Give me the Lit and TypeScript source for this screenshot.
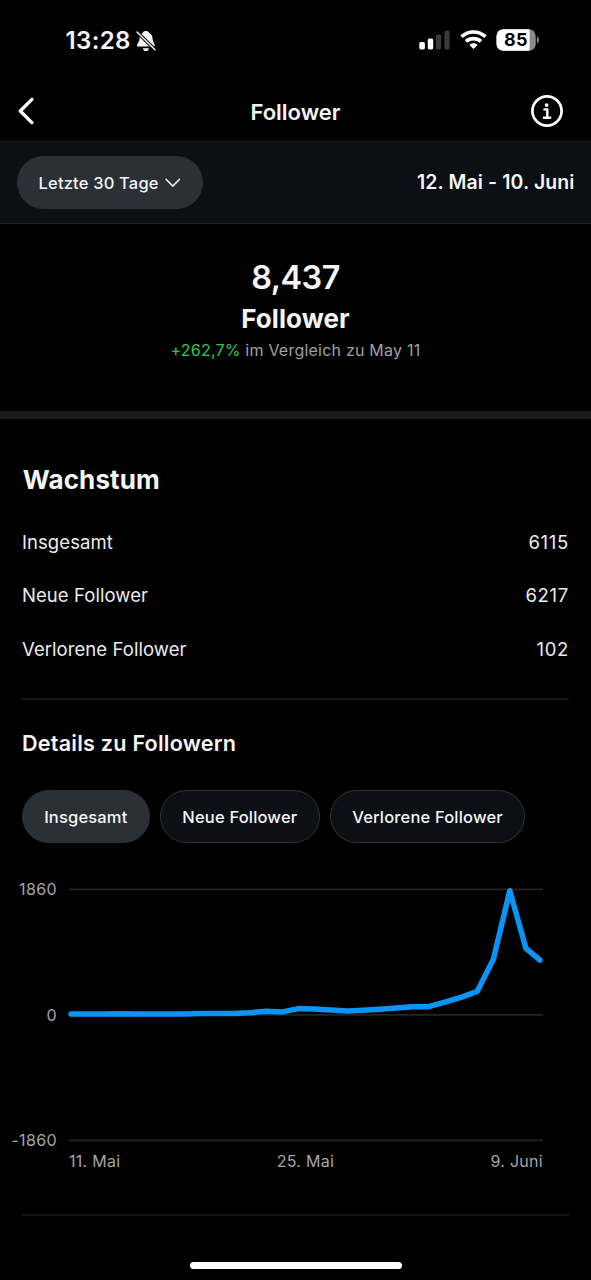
import { LitElement, html, svg, css } from "lit";
import { customElement, property, state } from "lit/decorators.js";
import { classMap } from "lit/directives/class-map.js";

const DAILY = [
  12, 12, 13, 18, 14, 12, 12, 15, 20, 21, 19, 32, 53, 45, 93, 89, 72, 56, 70, 84,
  104, 121, 122, 190, 260, 350, 830, 1840, 985, 810,
];
const MAX = 1860;

@customElement("status-bar")
class StatusBar extends LitElement {
  static styles = css`
    :host { display: flex; align-items: center; height: 81px; padding: 0 51px 0 65.5px; box-sizing: border-box; }
    .time { font-size: 24px; font-weight: 600; letter-spacing: 0.4px; line-height: 28px; }
    .bell { margin-left: 5px; }
    .right { margin-left: auto; display: flex; align-items: center; padding-bottom: 1px; }
    .wifi { margin-left: 10px; }
    .battery { margin-left: 9px; }
    svg { display: block; }
    .level { font: 700 18px Inter, sans-serif; letter-spacing: 0.3px; }
  `;
  render() {
    return html`
      <span class="time">13:28</span>
      <svg class="bell" width="20" height="22" viewBox="0 0 20 22">
        <path fill="#f4f4f4" d="M9.9 1C8.4 1 7.3 1.6 6.7 2.7C4.7 3.8 3.6 5.8 3.5 8.9C3.4 12.1 1 13.4 1 15.4C1 16.2 1.5 16.5 2.3 16.5H17.4C18.2 16.5 18.7 16.2 18.7 15.4C18.7 13.4 16.8 12.1 16.6 8.9C16.5 5.8 15.2 3.8 13.1 2.7C12.5 1.6 11.4 1 9.9 1ZM6.8 18.2H13C12.6 20.2 11.5 21 9.9 21S7.2 20.2 6.8 18.2Z"/>
        <path stroke="#000" stroke-width="3.4" d="M0.5 1.4L19.5 20.2"/>
        <path stroke="#f4f4f4" stroke-width="1.5" stroke-linecap="round" d="M1 2L19 19.8"/>
      </svg>
      <div class="right">
        <svg width="31" height="20" viewBox="0 0 31 20">
          <rect x="0.3" y="12" width="5.6" height="7.4" rx="1.6" fill="#fff"/>
          <rect x="8.8" y="8.6" width="5.4" height="10.8" rx="1.6" fill="#fff"/>
          <rect x="17" y="4.6" width="5.2" height="14.8" rx="1.6" fill="#3a3a3a"/>
          <rect x="25.4" y="0.6" width="5.2" height="18.8" rx="1.6" fill="#3a3a3a"/>
        </svg>
        <svg class="wifi" width="27" height="20" viewBox="0 0 27 20">
          <g fill="none" stroke="#fff" stroke-width="3.7">
            <path d="M1.5 6.7C8.3 0.4 18.7 0.4 25.5 6.7"/>
            <path d="M6 11.4C10.3 7.6 16.7 7.6 21 11.4"/>
          </g>
          <path fill="#fff" d="M13.5 19L9.3 14.9C11.6 12.6 15.4 12.6 17.7 14.9Z"/>
        </svg>
        <svg class="battery" width="44" height="22" viewBox="0 0 44 22">
          <defs><clipPath id="body"><rect width="39.2" height="21.4" x="0.5" y="0.3" rx="6.8"/></clipPath></defs>
          <g clip-path="url(#body)">
            <rect width="40" height="22" fill="#8b8b8b"/>
            <rect width="33.6" height="22" fill="#fff"/>
          </g>
          <path fill="#8b8b8b" d="M41 7.6C43.7 8.6 43.7 13.4 41 14.4Z"/>
          <text class="level" x="8" y="17.4" fill="#000">85</text>
        </svg>
      </div>
    `;
  }
}

@customElement("nav-header")
class NavHeader extends LitElement {
  static styles = css`
    :host { display: grid; grid-template-columns: 60px 1fr 60px; align-items: center; height: 60px; box-sizing: border-box; }
    h1 { margin: 0; text-align: center; font-size: 22px; font-weight: 600; line-height: 28px; padding-top: 1.5px; }
    .back { display: block; margin-left: 17px; }
    .info { display: block; justify-self: end; margin-right: 27px; }
  `;
  render() {
    return html`
      <svg class="back" width="18" height="28" viewBox="0 0 18 28">
        <path d="M14.9 2.3L3.3 14L14.9 25.6" fill="none" stroke="#fff" stroke-width="3.3" stroke-linecap="round" stroke-linejoin="round"/>
      </svg>
      <h1>Follower</h1>
      <svg class="info" width="34" height="34" viewBox="0 0 34 34">
        <circle cx="17" cy="17" r="14.6" fill="none" stroke="#fff" stroke-width="2.7"/>
        <circle cx="16.6" cy="11.1" r="1.9" fill="#fff"/>
        <path d="M14.4 15.4H17.3V23.6M13.9 23.7H20.2" fill="none" stroke="#fff" stroke-width="2.4" stroke-linecap="round" stroke-linejoin="round"/>
      </svg>
    `;
  }
}

@customElement("follower-chart")
class FollowerChart extends LitElement {
  @property({ attribute: false }) values: number[] = [];
  static styles = css`
    :host { display: grid; grid-template-columns: 57px 474px; column-gap: 12px; align-content: start; }
    .axis { display: flex; flex-direction: column; justify-content: space-between; height: 271px; text-align: right; }
    .axis, .dates { font-size: 16px; line-height: 20px; color: #a5a5a5; letter-spacing: 0.4px; }
    .plot { display: block; overflow: visible; margin-top: 9px; }
    .dates { grid-column: 2; display: flex; justify-content: space-between; letter-spacing: 0.28px; padding-top: 1px; }
    .grid { stroke: #242424; stroke-width: 1.6; }
    .line { fill: none; stroke: #0a95f6; stroke-width: 5.5; stroke-linecap: round; stroke-linejoin: round; }
  `;
  render() {
    const y = (v: number) => 126.9 - (v / MAX) * 125.5;
    const step = 16.25;
    const points = this.values
      .map((v, i) => `${Math.min(2 + i * step, 471).toFixed(1)},${y(v).toFixed(1)}`)
      .join(" ");
    return html`
      <div class="axis"><span>${MAX}</span><span>0</span><span>-${MAX}</span></div>
      <svg class="plot" width="474" height="253" viewBox="0 0 474 253">
        ${[MAX, 0, -MAX].map((v) => svg`<path class="grid" d="M0 ${y(v)}H474"/>`)}
        <polyline class="line" points=${points}/>
      </svg>
      <div class="dates"><span>11. Mai</span><span>25. Mai</span><span>9. Juni</span></div>
    `;
  }
}

@customElement("app-root")
class AppRoot extends LitElement {
  @state() private tab = 0;

  private rows = [["Insgesamt", "6115"], ["Neue Follower", "6217"], ["Verlorene Follower", "102"]];

  static styles = css`
    :host {
      display: flex; flex-direction: column; width: 591px; height: 1280px; overflow: hidden;
      background: #000; color: #f5f5f5; font-family: Inter, "Liberation Sans", sans-serif;
    }
    .filter {
      display: flex; align-items: center; justify-content: space-between; box-sizing: border-box;
      height: 83px; padding: 0 16.5px; background: #0c1015; border: solid #1a1c20; border-width: 1px 0;
    }
    button { font-family: inherit; color: inherit; margin: 0; box-sizing: border-box; }
    .range {
      display: flex; align-items: center; gap: 6px; width: 186.5px; height: 53px; padding: 1px 0 0 22px;
      border: 0; border-radius: 27px; background: #2b2f36;
      font-size: 16.5px; font-weight: 500; letter-spacing: 0.18px;
    }
    .period { font-size: 19.4px; font-weight: 600; letter-spacing: 0.14px; line-height: 24px; padding-bottom: 2px; }
    .summary { height: 187px; box-sizing: border-box; padding-top: 34px; text-align: center; }
    .count { font-size: 32.4px; font-weight: 600; line-height: 40px; letter-spacing: -0.5px; }
    .unit { font-size: 26px; font-weight: 700; line-height: 40px; margin-top: 1px; letter-spacing: 0.08px; }
    .compare { font-size: 16px; line-height: 22px; color: #a0a0a0; letter-spacing: 0.22px; }
    .up { color: #2fc94f; letter-spacing: 0.2px; }
    .band { height: 8px; background: #1c1c1c; }
    .growth { padding: 44px 22px 0; height: 279px; box-sizing: border-box; }
    h2 { margin: 0 0 31px; padding-left: 0.8px; font-size: 26px; font-weight: 700; line-height: 34px; letter-spacing: 0.14px; }
    .rows { display: grid; row-gap: 25.4px; }
    .row { display: flex; justify-content: space-between; font-size: 18.5px; line-height: 28px; color: #ececec; letter-spacing: 0.07px; }
    .num { letter-spacing: 0.7px; }
    .rule { height: 2px; margin: 0 22px; background: #161616; flex: none; }
    .details { height: 179px; box-sizing: border-box; padding: 27.5px 22px 0; }
    h3 { margin: 0 0 32.5px; font-size: 21.6px; font-weight: 600; line-height: 30px; letter-spacing: 0.22px; }
    .tabs { display: flex; gap: 10.5px; }
    .tab {
      height: 53px; padding: 1px 21.2px 0; border: 1px solid #303235; border-radius: 27px; background: #0c1015;
      font-size: 16.5px; font-weight: 500; letter-spacing: 0.17px; white-space: nowrap;
    }
    .on { background: #2b2f36; border-color: #2b2f36; }
    .chart { flex: none; height: 335px; }
    .home { width: 212px; height: 7px; margin: 46px auto 0; border-radius: 4px; background: #fff; flex: none; }
  `;

  render() {
    return html`
      <status-bar></status-bar>
      <nav-header></nav-header>
      <div class="filter">
        <button class="range">
          Letzte 30 Tage
          <svg width="16" height="10" viewBox="0 0 16 10">
            <path d="M1.2 1.4L7.8 8.1L14.4 1.4" fill="none" stroke="#e8e8ea" stroke-width="1.5" stroke-linecap="round" stroke-linejoin="round"/>
          </svg>
        </button>
        <span class="period">12. Mai - 10. Juni</span>
      </div>
      <section class="summary">
        <div class="count">8,437</div>
        <div class="unit">Follower</div>
        <div class="compare"><span class="up">+262,7%</span> im Vergleich zu May 11</div>
      </section>
      <div class="band"></div>
      <section class="growth">
        <h2>Wachstum</h2>
        <div class="rows">
          ${this.rows.map(([label, n]) => html`<div class="row"><span>${label}</span><span class="num">${n}</span></div>`)}
        </div>
      </section>
      <div class="rule"></div>
      <section class="details">
        <h3>Details zu Followern</h3>
        <div class="tabs">
          ${this.rows.map(([label], i) => html`
            <button class=${classMap({ tab: true, on: i === this.tab })} @click=${() => (this.tab = i)}>${label}</button>`)}
        </div>
      </section>
      <follower-chart class="chart" .values=${DAILY}></follower-chart>
      <div class="rule"></div>
      <div class="home"></div>
    `;
  }
}
